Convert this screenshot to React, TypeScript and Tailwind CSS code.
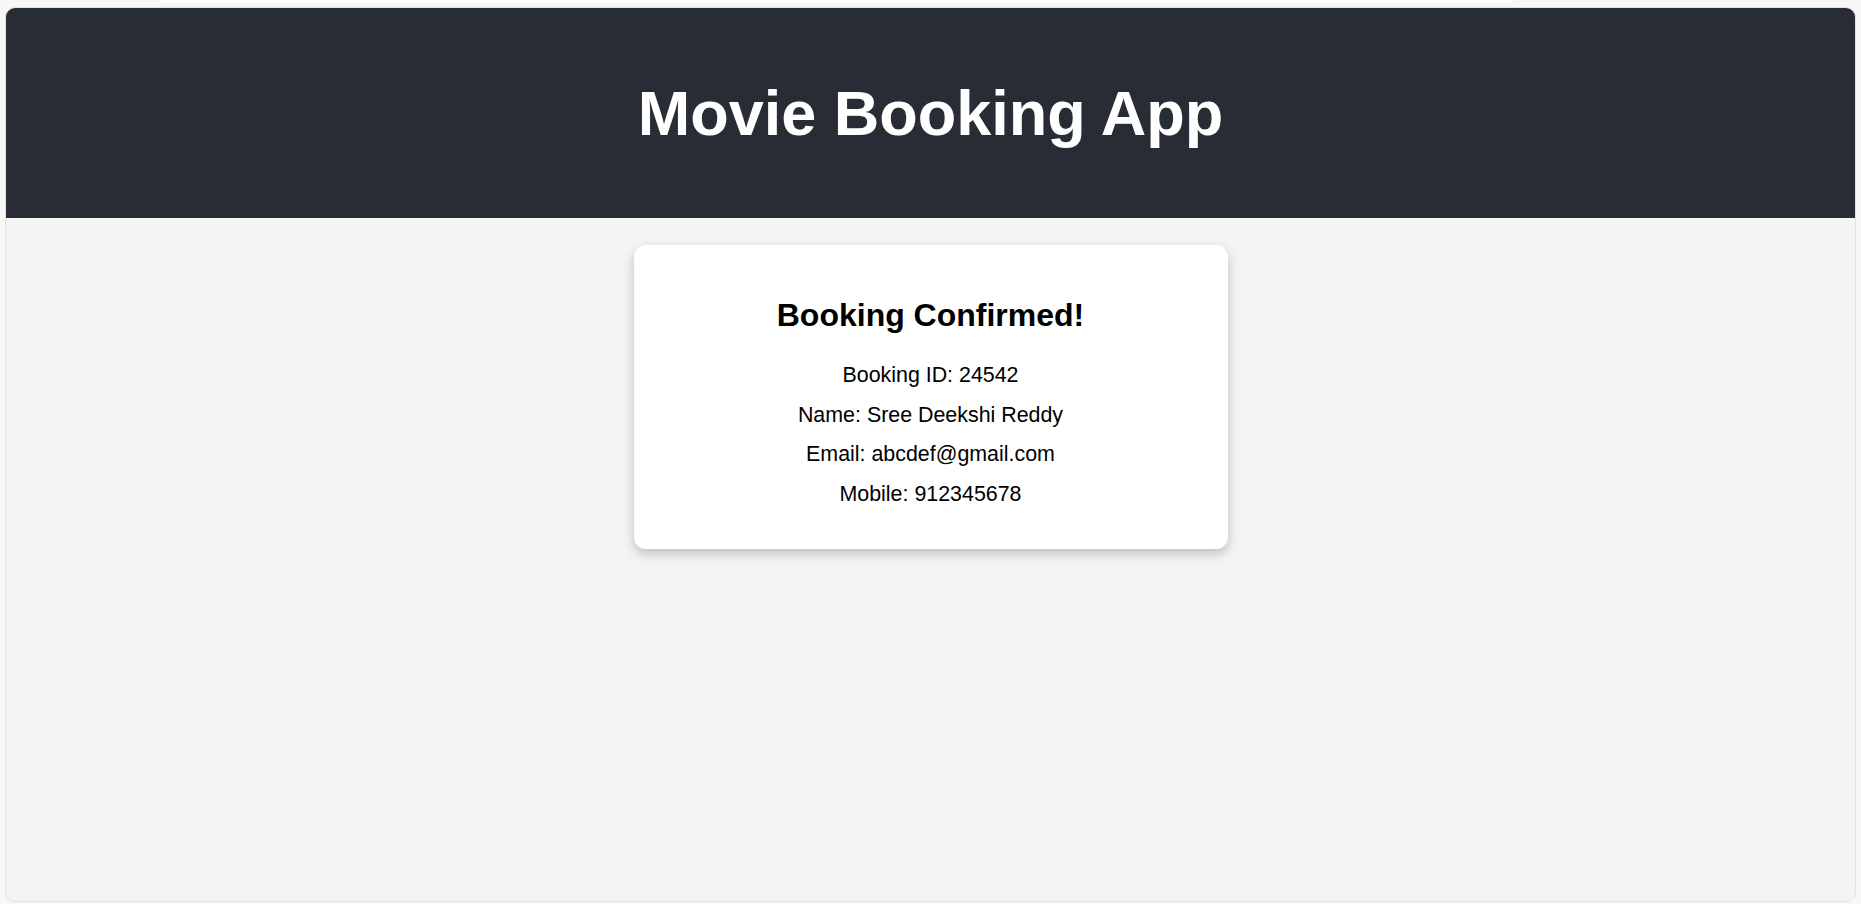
import React from 'react';

const booking = {
  id: '24542',
  name: 'Sree Deekshi Reddy',
  email: 'abcdef@gmail.com',
  mobile: '912345678',
};

const App = () => {
  return (
    <div className="min-h-screen bg-[#f7f7f7] font-['Liberation_Sans',Arial,sans-serif] text-black">
      {/* thin strip at the very top */}
      <div className="h-[7px]">
        <div className="ml-[160px] h-[3px] w-[1353px] rounded-b-[3px] bg-white" />
      </div>

      <div className="mx-[5px] flex h-[895px] flex-col overflow-hidden rounded-[10px] border border-[#e2e2e2] bg-[#f4f4f4]">
        <header className="flex h-[210px] shrink-0 items-center justify-center bg-[#282c34]">
          <h1 className="text-[63px] font-bold leading-normal text-white">Movie Booking App</h1>
        </header>

        <main className="flex justify-center pt-[27px]">
          <div className="w-[594px] rounded-[12px] bg-white px-6 pb-[35px] pt-[52px] text-center shadow-[0_5px_12px_rgba(0,0,0,0.22)]">
            <h2 className="mb-[22px] text-[32px] font-bold leading-[37px]">Booking Confirmed!</h2>
            <p className="text-[21.4px] leading-[39.5px]">Booking ID: {booking.id}</p>
            <p className="text-[21.4px] leading-[39.5px]">Name: {booking.name}</p>
            <p className="text-[21.4px] leading-[39.5px]">Email: {booking.email}</p>
            <p className="text-[21.4px] leading-[39.5px]">Mobile: {booking.mobile}</p>
          </div>
        </main>
      </div>
    </div>
  );
};

export default App;
